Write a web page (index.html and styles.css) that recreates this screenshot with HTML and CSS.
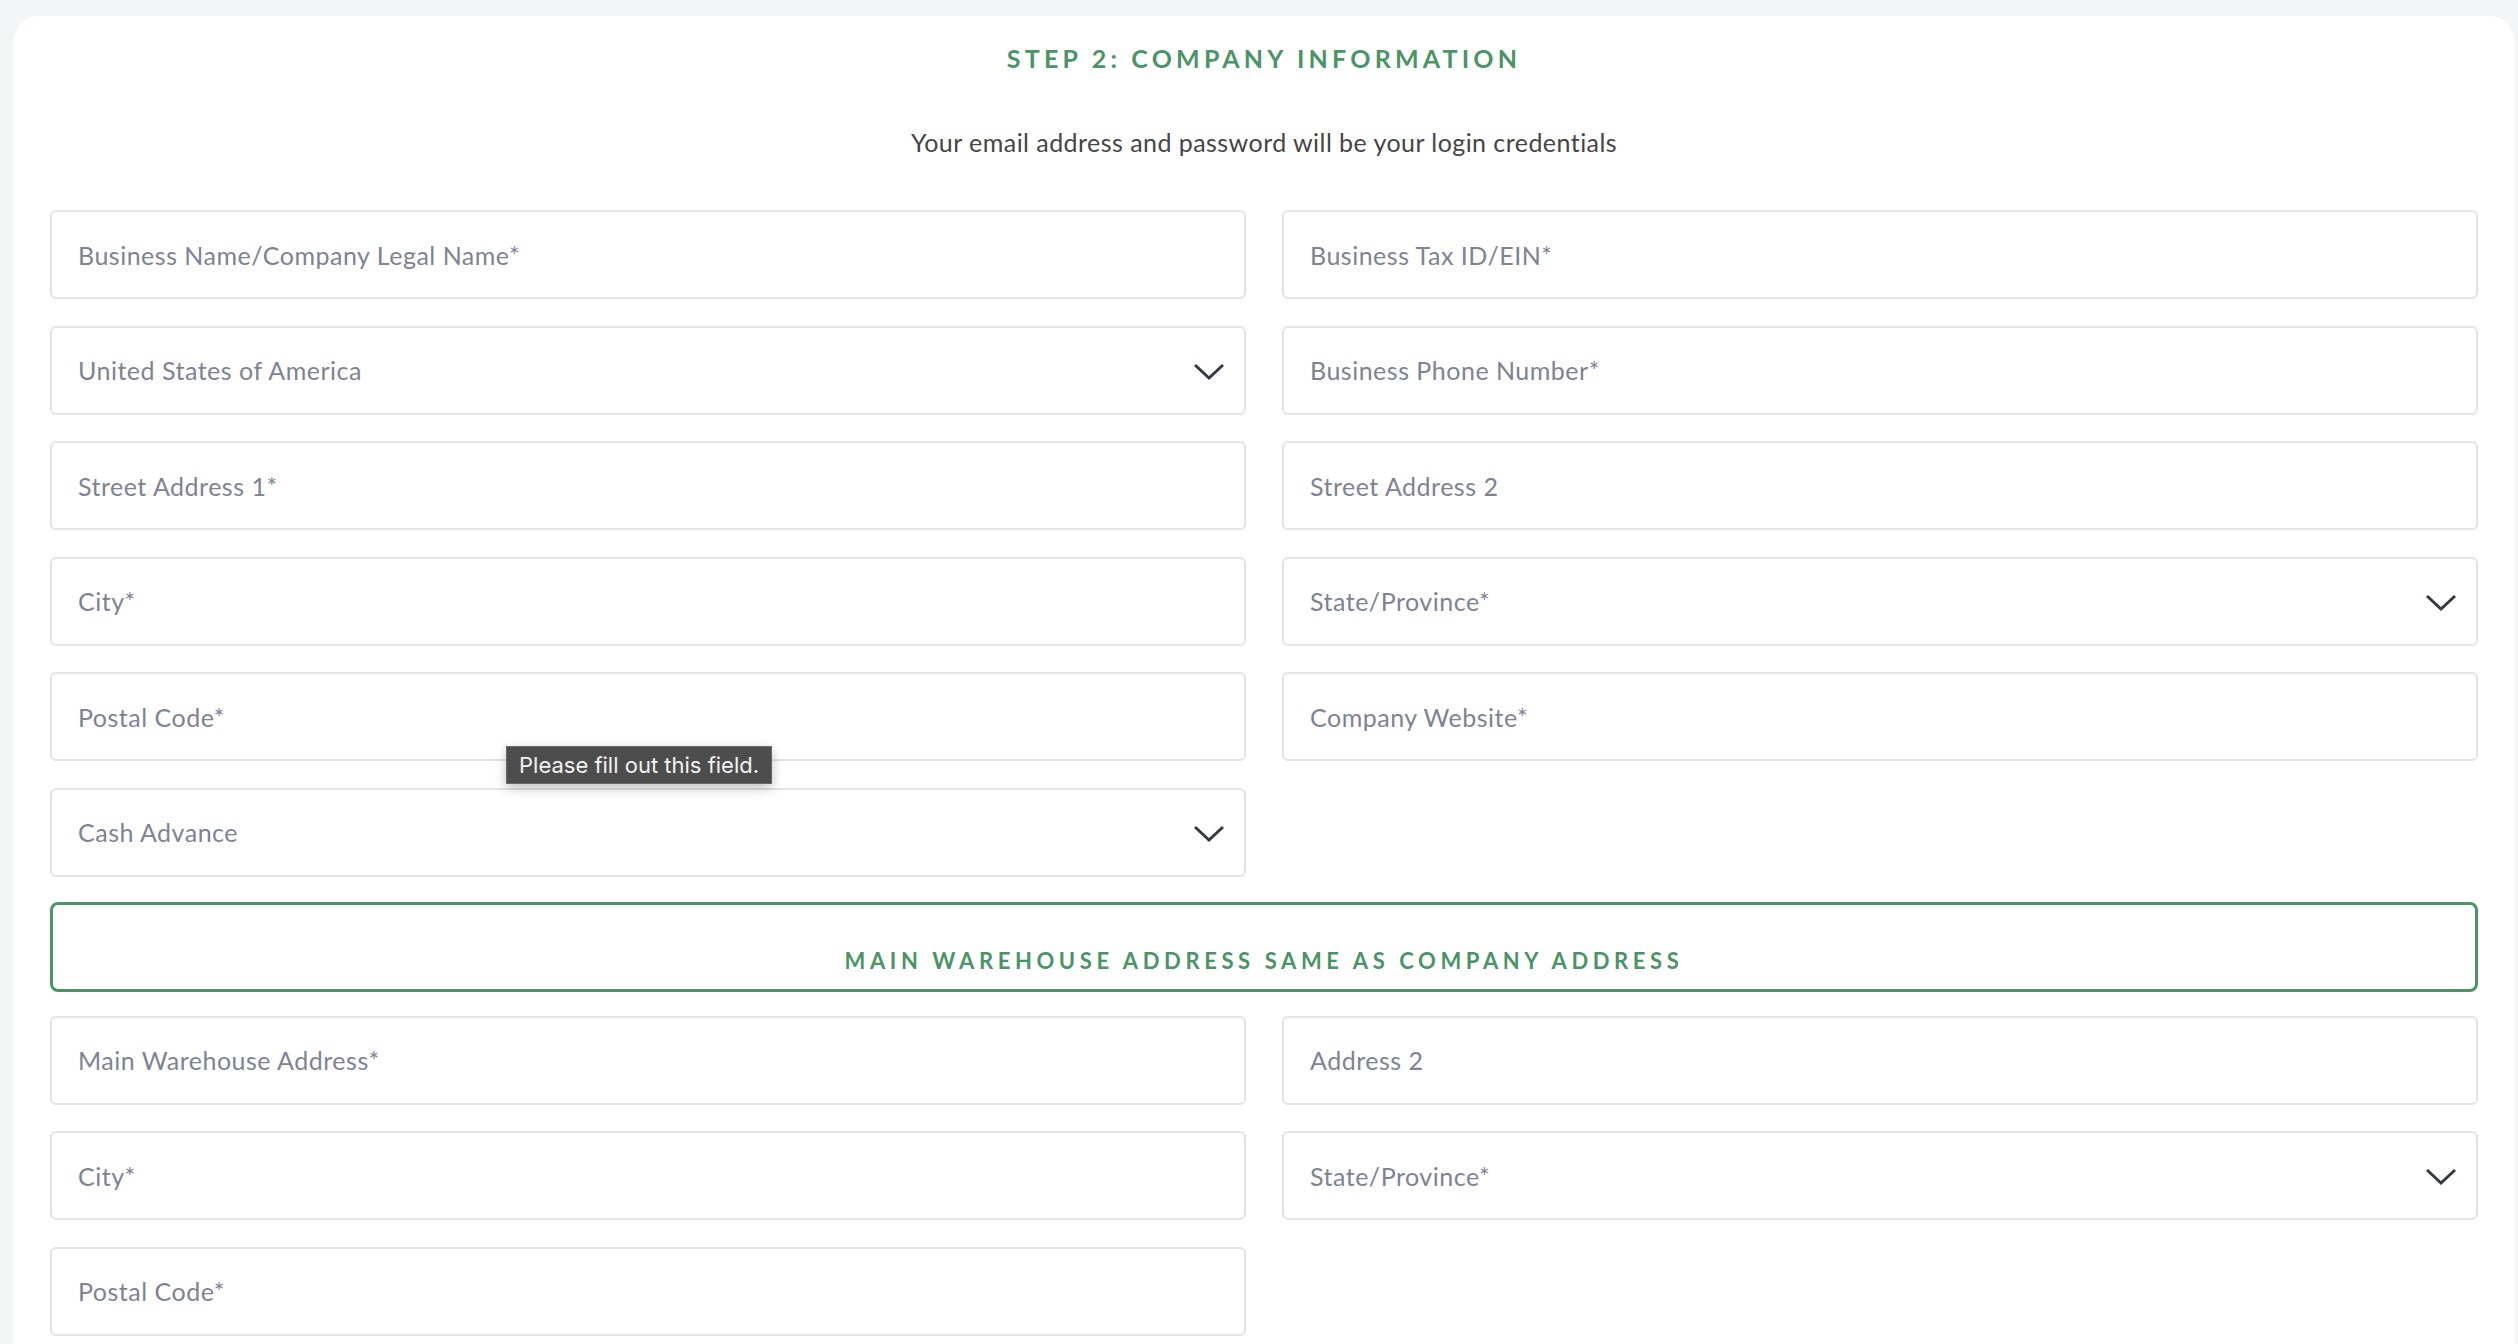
FILE: index.html
```html
<!DOCTYPE html>
<html lang="en">
<head>
  <meta charset="UTF-8">
  <title>Step 2: Company Information</title>
  <link rel="stylesheet" href="styles.css">
</head>
<body>

  <div class="card">
    <h2 class="step-title">Step 2: Company Information</h2>
    <p class="subtitle">Your email address and password will be your login credentials</p>

    <form class="form-grid">
      <input class="field" type="text" placeholder="Business Name/Company Legal Name*" required>
      <input class="field" type="text" placeholder="Business Tax ID/EIN*" required>

      <div class="select-wrap">
        <select class="field">
          <option>United States of America</option>
        </select>
        <svg class="chevron" viewBox="0 0 32 18"><path d="M2 2 L16 15 L30 2"/></svg>
      </div>
      <input class="field" type="text" placeholder="Business Phone Number*" required>

      <input class="field" type="text" placeholder="Street Address 1*" required>
      <input class="field" type="text" placeholder="Street Address 2">

      <input class="field" type="text" placeholder="City*" required>
      <div class="select-wrap">
        <select class="field">
          <option>State/Province*</option>
        </select>
        <svg class="chevron" viewBox="0 0 32 18"><path d="M2 2 L16 15 L30 2"/></svg>
      </div>

      <div class="tip-wrap">
        <input class="field" type="text" placeholder="Postal Code*" required>
        <div class="tooltip">Please fill out this field.</div>
      </div>
      <input class="field" type="text" placeholder="Company Website*" required>

      <div class="select-wrap">
        <select class="field">
          <option>Cash Advance</option>
        </select>
        <svg class="chevron" viewBox="0 0 32 18"><path d="M2 2 L16 15 L30 2"/></svg>
      </div>
      <div></div>

      <button type="button" class="same-btn">Main Warehouse Address Same As Company Address</button>

      <input class="field" type="text" placeholder="Main Warehouse Address*" required>
      <input class="field" type="text" placeholder="Address 2">

      <input class="field" type="text" placeholder="City*" required>
      <div class="select-wrap">
        <select class="field">
          <option>State/Province*</option>
        </select>
        <svg class="chevron" viewBox="0 0 32 18"><path d="M2 2 L16 15 L30 2"/></svg>
      </div>

      <input class="field" type="text" placeholder="Postal Code*" required>
    </form>
  </div>

</body>
</html>
```

FILE: styles.css
```css
body {
  margin: 0;
  padding: 16px 3px 0 13px;
  background: #f4f5f7;
  font-family: Lato, "Open Sans", sans-serif;
  overflow: hidden;
}
.card {
  background: #fff;
  border-radius: 26px 26px 0 0;
  padding: 26px 37px 40px;
  min-height: 1400px;
  box-sizing: border-box;
}
.step-title {
  margin: 0;
  text-align: center;
  color: #4a9466;
  font-size: 25px;
  line-height: 32px;
  font-weight: 700;
  letter-spacing: 4.2px;
  text-transform: uppercase;
}
.subtitle {
  margin: 53px 0 0;
  text-align: center;
  color: #454545;
  font-size: 25px;
  letter-spacing: 0.45px;
  line-height: 30px;
}
.form-grid {
  display: grid;
  grid-template-columns: 1fr 1fr;
  column-gap: 36px;
  row-gap: 26.5px;
  margin-top: 53px;
}
.field {
  display: block;
  width: 100%;
  height: 89px;
  box-sizing: border-box;
  border: 2px solid #e3e3e5;
  border-radius: 6px;
  background: #fff;
  padding: 0 26px;
  font-family: Lato, "Open Sans", sans-serif;
  font-size: 25px;
  letter-spacing: 0.5px;
  color: #7d8395;
  outline: none;
}
.field::placeholder {
  color: #7d8395;
}
select.field {
  appearance: none;
  -webkit-appearance: none;
}
.select-wrap,
.tip-wrap {
  position: relative;
}
.chevron {
  position: absolute;
  right: 21px;
  top: 37px;
  width: 32px;
  height: 18px;
  pointer-events: none;
}
.chevron path {
  fill: none;
  stroke: #343a44;
  stroke-width: 3;
}
.tooltip {
  position: absolute;
  left: 456px;
  top: 74px;
  background: #4d4d4d;
  border: 1px solid #6a6a6a;
  color: #f2f2f2;
  font-family: Inter, "Noto Sans", sans-serif;
  font-size: 22px;
  line-height: 36px;
  padding: 0 12px;
  box-shadow: 0 4px 12px rgba(0, 0, 0, 0.25);
  z-index: 2;
}
.same-btn {
  grid-column: 1 / span 2;
  height: 90px;
  margin: -1px 0 -3px;
  border: 3.5px solid #4a9466;
  border-radius: 8px;
  background: #fff;
  color: #4a9466;
  font-family: Lato, "Open Sans", sans-serif;
  font-size: 22px;
  font-weight: 700;
  letter-spacing: 4.6px;
  text-transform: uppercase;
  padding-top: 28px;
  cursor: pointer;
}
```
